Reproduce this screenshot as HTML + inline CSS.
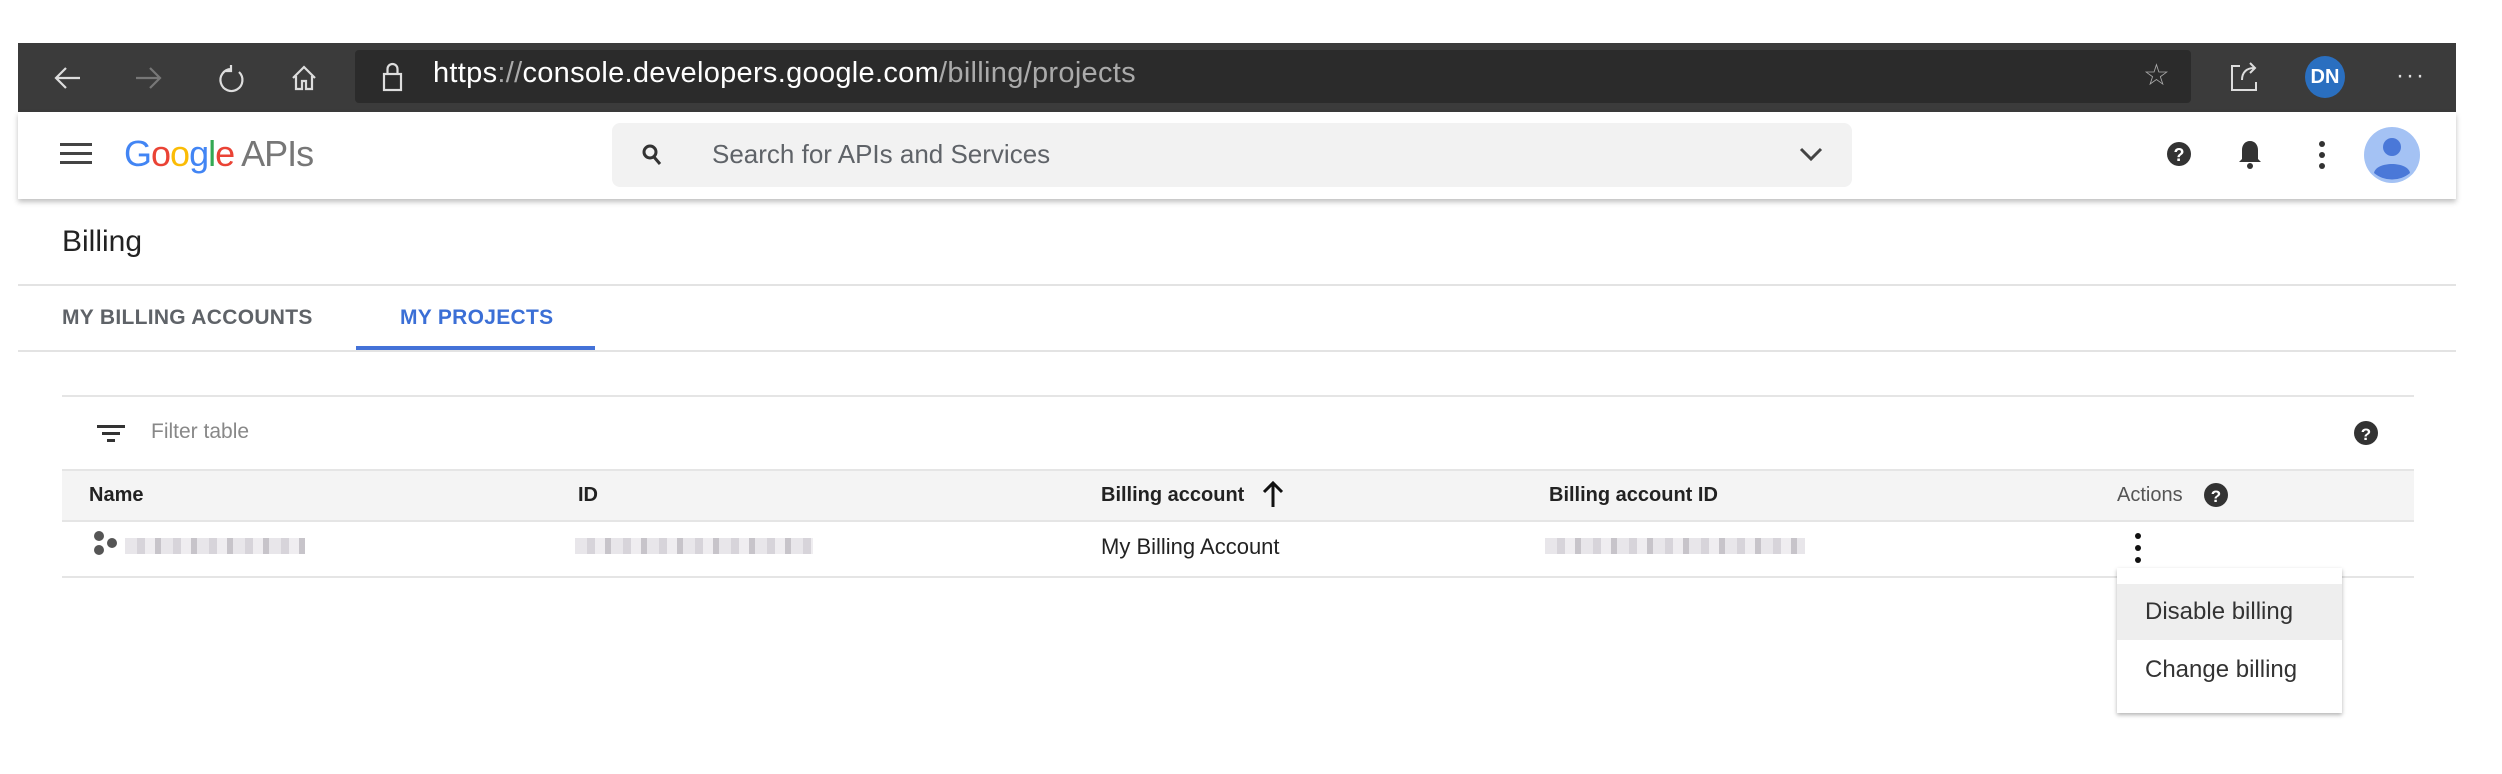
<!DOCTYPE html>
<html><head><meta charset="utf-8"><style>
*{margin:0;padding:0;box-sizing:border-box}
body{width:2502px;height:774px;background:#fff;position:relative;overflow:hidden;font-family:"Liberation Sans",Arial,sans-serif}
.a{position:absolute}
.t{position:absolute;white-space:nowrap}
.blur{position:absolute;height:16px;background:repeating-linear-gradient(90deg,#e4e2e6 0 12px,#d0ccd3 12px 20px,#eceaee 20px 30px,#bdb9c0 30px 36px);opacity:.85}
</style></head><body>
<div class="a" style="left:18px;top:43px;width:2438px;height:69px;background:#3b3b3b"></div>
<div class="a" style="left:355px;top:50px;width:1836px;height:53px;background:#2b2b2b;border-radius:4px"></div>
<svg class="a" style="left:50px;top:60px" width="300" height="36" viewBox="0 0 300 36" fill="none" stroke="#ddd" stroke-width="2.2">
<path d="M30 18H6M16 8L6 18l10 10"/>
<path d="M86 18h24M100 8l10 10-10 10" stroke="#777"/>
<path d="M181 9a11 11 0 1 0 8 3M181 5v6h-6"/>
<path d="M243 18l11-11 11 11M246 16v13h6v-8h4v8h6V16" />
</svg>
<svg class="a" style="left:380px;top:60px" width="26" height="34" viewBox="0 0 26 34" fill="none" stroke="#ddd" stroke-width="2.2"><rect x="4" y="14" width="17" height="16"/><path d="M7.5 14V9a5 5 0 0 1 10 0v5"/></svg>
<div class="t" style="left:433px;top:57px;font-size:29px;color:#fff;letter-spacing:0.3px">https<span style="color:#aaa">://</span>console.developers.google.com<span style="color:#aaa">/billing/projects</span></div>
<div class="t" style="left:2143px;top:58px;font-size:30px;color:#aaa">☆</div>
<svg class="a" style="left:2228px;top:60px" width="32" height="34" viewBox="0 0 32 34" fill="none" stroke="#ddd" stroke-width="2"><path d="M12 6H4v24h24v-8M14 20c0-8 5-12 12-12M22 3l5 5-5 5"/></svg>
<div class="a" style="left:2305px;top:56px;width:40px;height:42px;border-radius:50%;background:#2a6fc0;color:#fff;font-size:20px;font-weight:bold;text-align:center;line-height:42px">DN</div>
<div class="t" style="left:2396px;top:62px;font-size:24px;color:#ddd;letter-spacing:2px">···</div>
<div class="a" style="left:18px;top:112px;width:2438px;height:87px;background:#fff;box-shadow:0 3px 5px rgba(0,0,0,.25)"></div>
<svg class="a" style="left:60px;top:142px" width="32" height="24"><rect y="1" width="32" height="3" fill="#444"/><rect y="10" width="32" height="3" fill="#444"/><rect y="19" width="32" height="3" fill="#444"/></svg>
<div class="t" style="left:124px;top:133px;font-size:36px;letter-spacing:-1px"><span style="color:#4285f4">G</span><span style="color:#ea4335">o</span><span style="color:#fbbc05">o</span><span style="color:#4285f4">g</span><span style="color:#34a853">l</span><span style="color:#ea4335">e</span><span style="color:#777"> APIs</span></div>
<div class="a" style="left:612px;top:123px;width:1240px;height:64px;background:#f2f2f2;border-radius:8px"></div>
<svg class="a" style="left:640px;top:142px" width="24" height="26" fill="none" stroke="#333" stroke-width="3"><circle cx="10" cy="10" r="6"/><path d="M14 15l6 7"/></svg>
<div class="t" style="left:712px;top:139px;font-size:26px;color:#5f6368">Search for APIs and Services</div>
<svg class="a" style="left:1798px;top:145px" width="26" height="18" fill="none" stroke="#444" stroke-width="3"><path d="M3 4l10 10 10-10"/></svg>
<svg class="a" style="left:2165px;top:140px" width="28" height="28"><circle cx="14" cy="14" r="12" fill="#333"/><text x="14" y="21" font-size="18" font-weight="bold" fill="#fff" text-anchor="middle" font-family="Liberation Sans">?</text></svg>
<svg class="a" style="left:2238px;top:138px" width="24" height="32"><path d="M12 3c-5 0-8 4-8 9v9l-3 3h22l-3-3v-9c0-5-3-9-8-9z" fill="#333"/><circle cx="12" cy="28" r="3" fill="#333"/></svg>
<svg class="a" style="left:2316px;top:140px" width="12" height="30"><circle cx="6" cy="4" r="3" fill="#333"/><circle cx="6" cy="15" r="3" fill="#333"/><circle cx="6" cy="26" r="3" fill="#333"/></svg>
<svg class="a" style="left:2364px;top:127px" width="56" height="56"><circle cx="28" cy="28" r="28" fill="#a4c2f4"/><circle cx="28" cy="20" r="9" fill="#4a78d8"/><path d="M10 46c2-12 34-12 36 0a28 28 0 0 1-36 0z" fill="#4a78d8"/></svg>
<div class="t" style="left:62px;top:225px;font-size:30px;color:#222">Billing</div>
<div class="a" style="left:18px;top:284px;width:2438px;height:2px;background:#e3e3e3"></div>
<div class="t" style="left:62px;top:306px;font-size:21px;color:#5f6368;font-weight:bold;letter-spacing:0.3px">MY BILLING ACCOUNTS</div>
<div class="t" style="left:400px;top:306px;font-size:21px;color:#3b6fd6;font-weight:bold;letter-spacing:0.3px">MY PROJECTS</div>
<div class="a" style="left:356px;top:346px;width:239px;height:4px;background:#4472d8"></div>
<div class="a" style="left:18px;top:350px;width:2438px;height:2px;background:#e3e3e3"></div>
<div class="a" style="left:62px;top:395px;width:2352px;height:2px;background:#e5e5e5"></div>
<svg class="a" style="left:97px;top:424px" width="28" height="20"><rect x="0" y="1" width="28" height="3" fill="#333"/><rect x="5" y="8" width="18" height="3" fill="#333"/><rect x="10" y="15" width="8" height="3" fill="#333"/></svg>
<div class="t" style="left:151px;top:420px;font-size:21px;color:#888">Filter table</div>
<svg class="a" style="left:2353px;top:420px" width="26" height="26"><circle cx="13" cy="13" r="12" fill="#333"/><text x="13" y="20" font-size="17" font-weight="bold" fill="#fff" text-anchor="middle" font-family="Liberation Sans">?</text></svg>
<div class="a" style="left:62px;top:469px;width:2352px;height:53px;background:#f4f4f4;border-top:2px solid #e5e5e5;border-bottom:2px solid #e5e5e5"></div>
<div class="t" style="left:89px;top:484px;font-size:20px;color:#222;font-weight:bold">Name</div>
<div class="t" style="left:578px;top:484px;font-size:20px;color:#222;font-weight:bold">ID</div>
<div class="t" style="left:1101px;top:484px;font-size:20px;color:#222;font-weight:bold">Billing account</div>
<svg class="a" style="left:1262px;top:480px" width="22" height="28" fill="none" stroke="#111" stroke-width="3"><path d="M11 27V3M2 12l9-9 9 9"/></svg>
<div class="t" style="left:1549px;top:484px;font-size:20px;color:#222;font-weight:bold">Billing account ID</div>
<div class="t" style="left:2117px;top:484px;font-size:20px;color:#555">Actions</div>
<svg class="a" style="left:2203px;top:482px" width="26" height="26"><circle cx="13" cy="13" r="12" fill="#333"/><text x="13" y="20" font-size="17" font-weight="bold" fill="#fff" text-anchor="middle" font-family="Liberation Sans">?</text></svg>
<svg class="a" style="left:93px;top:530px" width="26" height="26" fill="#555"><circle cx="6" cy="6" r="5"/><circle cx="6" cy="20" r="5"/><circle cx="19" cy="13" r="5"/></svg>
<div class="blur" style="left:125px;top:538px;width:180px"></div>
<div class="blur" style="left:575px;top:538px;width:238px"></div>
<div class="t" style="left:1101px;top:534px;font-size:22px;color:#222">My Billing Account</div>
<div class="blur" style="left:1545px;top:538px;width:260px"></div>
<svg class="a" style="left:2132px;top:532px" width="12" height="32"><circle cx="6" cy="4" r="3" fill="#111"/><circle cx="6" cy="16" r="3" fill="#111"/><circle cx="6" cy="28" r="3" fill="#111"/></svg>
<div class="a" style="left:62px;top:576px;width:2352px;height:2px;background:#e5e5e5"></div>
<div class="a" style="left:2117px;top:568px;width:225px;height:145px;background:#fff;box-shadow:0 2px 4px rgba(0,0,0,.3)"></div>
<div class="a" style="left:2117px;top:584px;width:225px;height:56px;background:#eee"></div>
<div class="t" style="left:2145px;top:598px;font-size:24px;color:#333">Disable billing</div>
<div class="t" style="left:2145px;top:656px;font-size:24px;color:#333">Change billing</div>
</body></html>
